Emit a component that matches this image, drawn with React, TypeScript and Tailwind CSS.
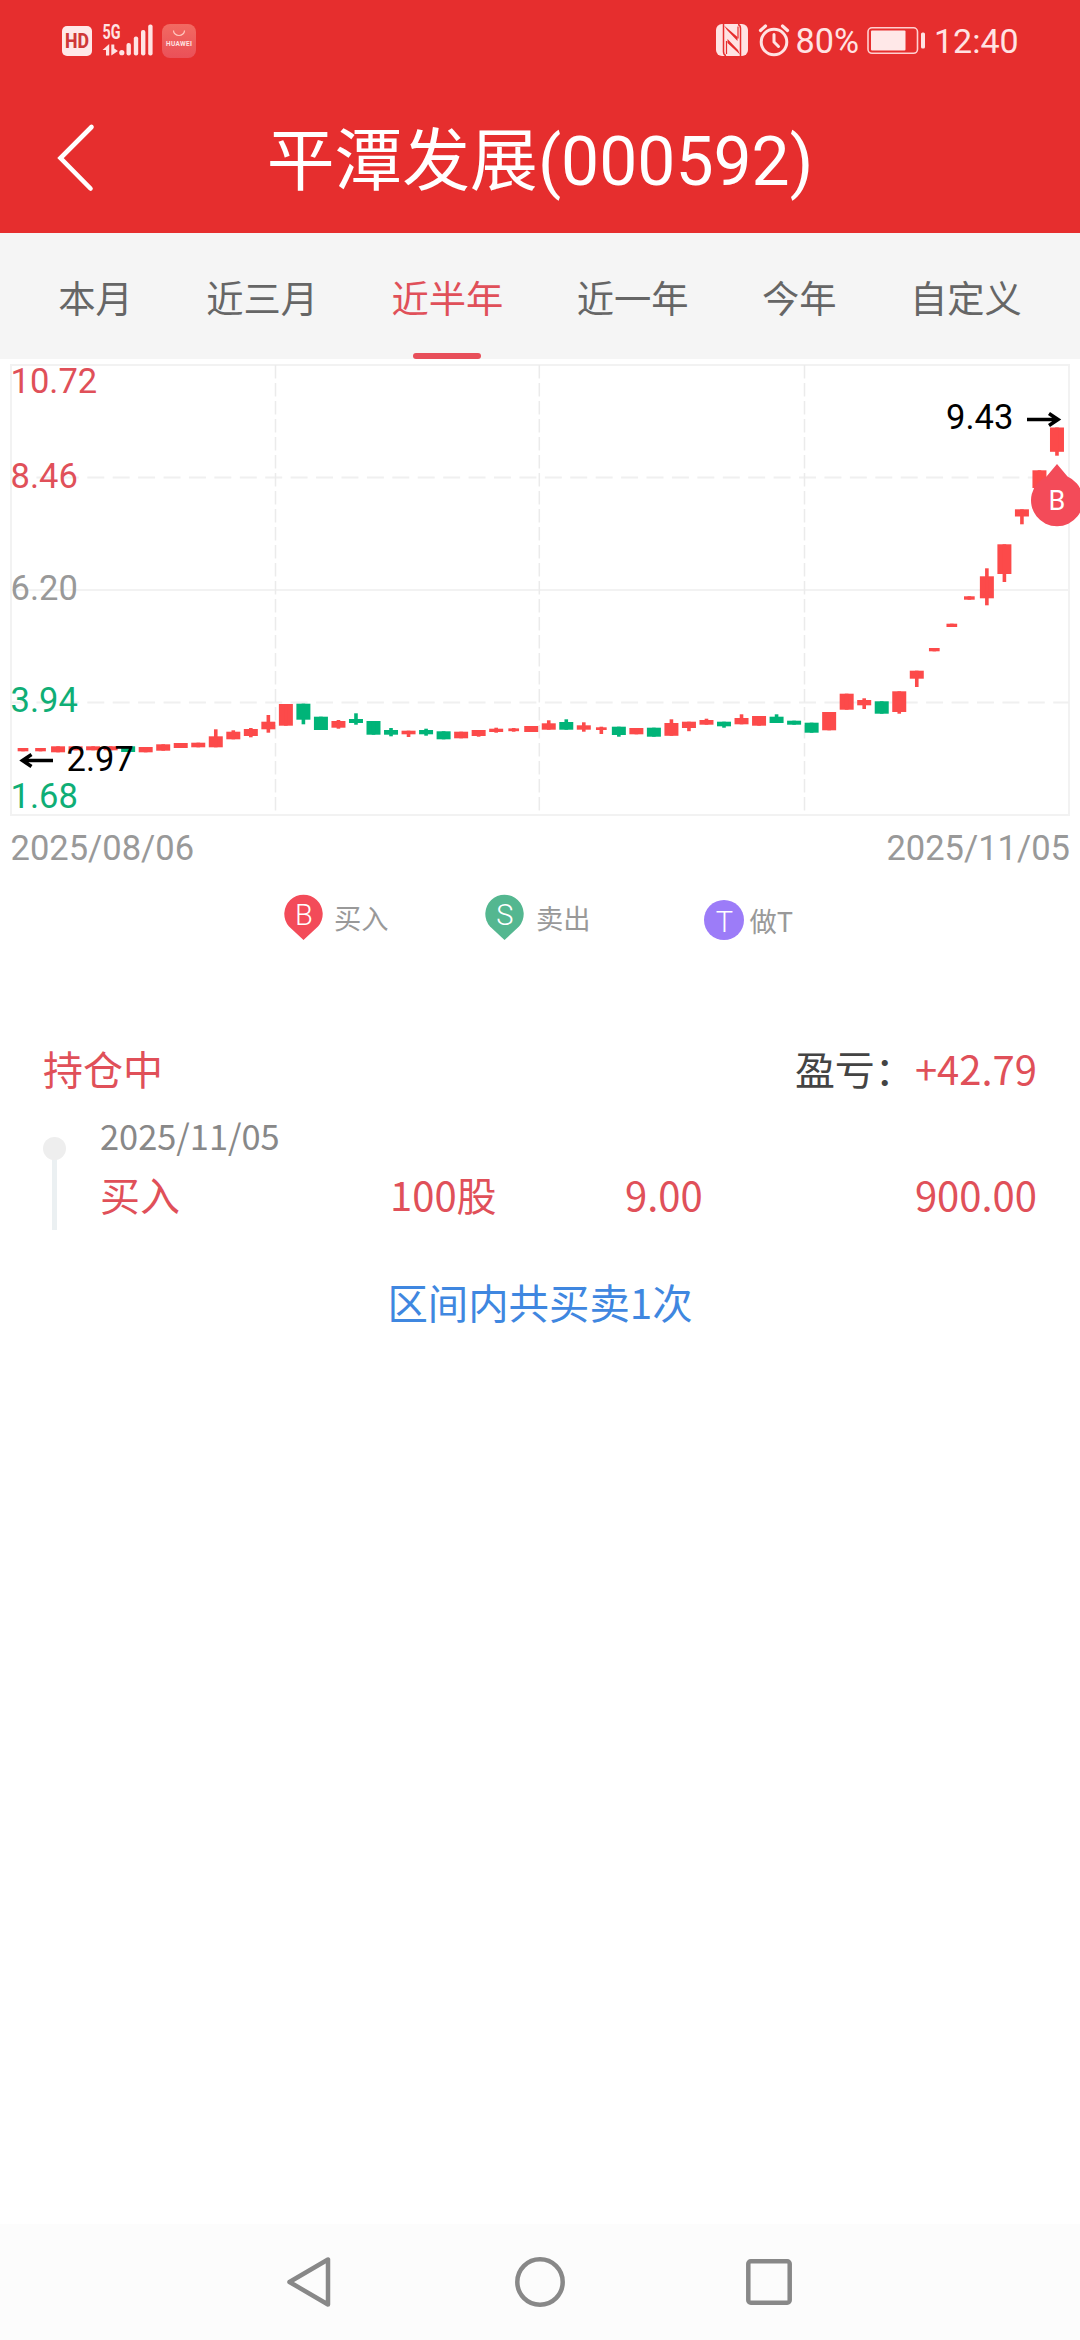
import React from "react";

const RED = "#fc4a4a";
const GREEN = "#00b478";

// [colour, body top, body bottom, high, low, flat?]
type Candle = [string, number, number, number, number, boolean?];
const candles: Candle[] = [
  [RED, 748, 751.3, 748, 751.3, true],
  [RED, 748, 751.3, 748, 751.3, true],
  [RED, 746.3, 752.3, 746.3, 752.3],
  [RED, 746.3, 750.3, 746.3, 750.3],
  [RED, 746.3, 750.3, 746.3, 750.3],
  [RED, 746.3, 750.3, 746.3, 750.3],
  [GREEN, 746.3, 752, 746.3, 752],
  [RED, 747, 752.3, 747, 752.3],
  [RED, 744.3, 750.7, 744.3, 750.7],
  [RED, 743, 748, 743, 748],
  [RED, 742.7, 747.3, 742.7, 747.3],
  [RED, 736.3, 747.3, 729.3, 747.3],
  [RED, 731.7, 739.3, 730.3, 739.3],
  [RED, 729, 736, 728, 737.3],
  [RED, 721.7, 729.3, 715, 732.7],
  [RED, 704, 725.7, 704, 725.7],
  [GREEN, 703.7, 719.7, 703.7, 724.3],
  [GREEN, 716.7, 730, 716.7, 730],
  [RED, 721, 727.7, 720, 728.7],
  [GREEN, 719, 723, 713.3, 724.7],
  [GREEN, 721, 734.7, 721, 734.7],
  [GREEN, 730, 734.7, 728, 736.3],
  [RED, 730.7, 734.3, 730.7, 737],
  [GREEN, 730, 734.3, 728.7, 735.7],
  [GREEN, 731.3, 739.3, 731.3, 739.3],
  [RED, 731.7, 738.3, 731.7, 738.3],
  [RED, 730, 736, 730, 736.7],
  [RED, 728.7, 732, 727.7, 732.7],
  [RED, 728.4, 731.2, 728, 731.7, true],
  [RED, 726, 732, 726, 732],
  [RED, 723.3, 729.7, 720.3, 729.7],
  [GREEN, 722, 729.7, 719.3, 729.7],
  [RED, 725.3, 729.7, 722.3, 731.7],
  [RED, 727.3, 730, 726.7, 734, true],
  [GREEN, 726.7, 735, 726.7, 736.7],
  [RED, 728, 734.3, 728, 734.3],
  [GREEN, 727.7, 736.7, 727.7, 736.7],
  [RED, 723, 735.8, 719.3, 735.8],
  [RED, 721.7, 728, 721.7, 731.2],
  [RED, 720, 724.7, 718.7, 724.7],
  [GREEN, 721.7, 726.3, 721.7, 727.7],
  [RED, 718, 724.3, 714.3, 724.3],
  [RED, 716, 725.7, 716, 725.7],
  [GREEN, 716.7, 723, 714.3, 723],
  [GREEN, 720.7, 724.7, 720.7, 724.7],
  [GREEN, 722.7, 732.7, 722.7, 732.7],
  [RED, 712, 730.3, 712, 730.3],
  [RED, 693.7, 709.7, 693.7, 709.7],
  [RED, 700, 705.3, 698.3, 709],
  [GREEN, 701.3, 713.7, 701.3, 713.7],
  [RED, 691.3, 712, 691.3, 713.7],
  [RED, 670.7, 678.7, 670.7, 687],
  [RED, 648, 651.3, 648, 651.3, true],
  [RED, 623.7, 627, 623.7, 627, true],
  [RED, 596.3, 599.7, 596.3, 599.7, true],
  [RED, 576.3, 598.3, 568.3, 605.3],
  [RED, 544.3, 574, 544.3, 582],
  [RED, 509.3, 516.5, 509.3, 524.3],
  [RED, 470.3, 488, 470.3, 488],
  [RED, 427.5, 451.8, 427.5, 455.7],
];

function StatusBar() {
  return (
    <div className="flex h-[82px] items-center justify-between pr-[62px] pl-[62px] font-[Roboto] text-[#ffe3e3]">
      <svg className="h-[40px] w-[140px]" viewBox="62 21 140 40">
        <rect x="62" y="26" width="30" height="30" rx="5" fill="#ffe8e8" />
        <text x="77" y="48" textAnchor="middle" fontFamily="Roboto" fontWeight="800" fontSize="20" textLength="24" lengthAdjust="spacingAndGlyphs" fill="#cf3838">HD</text>
        <text x="102.5" y="38.5" fontFamily="Roboto" fontWeight="700" fontSize="19.5" textLength="18" lengthAdjust="spacingAndGlyphs" fill="#ffe3e3">5G</text>
        <g fill="#ffe3e3">
          <path d="M109.2 44v11.5h-3.2V50h-3.500zM111.300 44.500h3v4l3.700 2.500-6.700 4.500z" />
          <circle cx="121.800" cy="52.700" r="2.600" />
          <rect x="126.500" y="43" width="4.400" height="12.500" rx="2" />
          <rect x="133.800" y="36.500" width="4.400" height="19" rx="2" />
          <rect x="141" y="30" width="4.400" height="25.500" rx="2" />
          <rect x="148.200" y="24.500" width="4.400" height="31" rx="2" />
        </g>
        <defs>
          <linearGradient id="store" x1="0" y1="0" x2="0" y2="1">
            <stop offset="0" stopColor="#f26a62" />
            <stop offset="1" stopColor="#ea5058" />
          </linearGradient>
        </defs>
        <rect x="162" y="24" width="34" height="34" rx="8" fill="url(#store)" />
        <path d="M173.500 30.500a5.500 5 0 0 0 11 0" fill="none" stroke="#ffc9c0" strokeWidth="1.200" />
        <text x="179" y="45.800" textAnchor="middle" fontFamily="Roboto" fontWeight="700" fontSize="6.500" textLength="26" fill="#ffe3e3">HUAWEI</text>
      </svg>
      <div className="flex items-center">
        <svg className="h-[40px] w-[78px]" viewBox="716 21 78 40">
          <rect x="716" y="24" width="32" height="32" rx="6" fill="#ffe3e3" />
          <path d="M723.500 24V51.500q0 3.500 2.500 4M740.500 56V28.500q0-3.500-2.500-4" fill="none" stroke="#e62e2e" strokeWidth="1.500" />
          <path d="M724 25.500L737.500 37V41L727 30zM740 54.500L727.500 43V39L738 50z" fill="#e62e2e" />
          <path d="M726.500 41v13M738 26.500v12" fill="none" stroke="#e62e2e" strokeWidth="1.200" />
          <g fill="none" stroke="#ffe3e3" strokeLinecap="round">
            <circle cx="774" cy="42" r="12.800" strokeWidth="3" />
            <path d="M774 34.500v7.500l4.500 4.500" strokeWidth="3" />
            <path d="M760.500 30.500l5-4.500M787.500 30.500l-5-4.500" strokeWidth="3.200" />
          </g>
        </svg>
        <span className="w-[73px] pl-[1.500px] text-[34.200px] leading-[40px]">80%</span>
        <svg className="h-[40px] w-[67px]" viewBox="867 21 67 40">
          <rect x="868" y="27.800" width="49.500" height="25.500" rx="4" fill="none" stroke="#ffd0d0" strokeWidth="1.600" />
          <rect x="871" y="30.500" width="34.500" height="20" rx="1" fill="#ffe8e8" />
          <rect x="921" y="32.500" width="4" height="16" rx="1.500" fill="#ffe3e3" />
        </svg>
        <span className="w-[84px] text-[34px] leading-[40px] whitespace-nowrap">12:40</span>
      </div>
    </div>
  );
}

function Header() {
  return (
    <header className="h-[233px] bg-[#e62e2e]">
      <StatusBar />
      <div className="grid h-[151px] grid-cols-[120px_1fr_120px] items-center">
        <svg className="ml-[54px] h-[74px] w-[44px]" viewBox="54 120 44 74">
          <path d="M91.500 126L60.500 157l30 30.500" fill="none" stroke="#fff" strokeWidth="4.600" strokeLinecap="round" />
        </svg>
        <h1 className="pt-[8px] text-center font-[Roboto,'Noto_Sans_CJK_SC',sans-serif] text-[67.800px] leading-[90px] whitespace-nowrap text-white">
          平潭发展(000592)
        </h1>
      </div>
    </header>
  );
}

const tabs = ["本月", "近三月", "近半年", "近一年", "今年", "自定义"];

function Tabs() {
  return (
    <nav className="flex h-[126px] justify-center bg-[#f5f5f5] font-['Noto_Sans_CJK_SC',sans-serif] text-[37.300px]">
      {tabs.map((t) => {
        const active = t === "近半年";
        return (
          <button key={t} className={`flex flex-col items-center px-[36.700px] whitespace-nowrap ${active ? "text-[#e05059]" : "text-[#666]"}`}>
            <span className="flex h-[120px] items-center pt-[8px] leading-[54px]">{t}</span>
            {active && <span className="h-[6px] w-[68px] rounded-[3px] bg-[#e84f5a]" />}
          </button>
        );
      })}
    </nav>
  );
}

function Chart() {
  return (
    <svg className="block h-[521px] w-full" viewBox="0 359 1080 521" fontFamily="Roboto, sans-serif" fontSize="34.5">
      <g fill="none" stroke="#f2f2f2" strokeWidth="2">
        <rect x="11" y="365" width="1058" height="450" />
        <path d="M11 590H1069" />
        <path d="M11 477.500H1069M11 702.500H1069" strokeDasharray="17 8.420" stroke="#f0f0f0" />
        <path d="M275.500 365V815M539.300 365V815M804.500 365V815" strokeDasharray="13.500 4.500" strokeWidth="1.500" stroke="#ebebeb" />
      </g>
      <g fill="#e05059">
        <text x="10.500" y="393">10.72</text>
        <text x="10.500" y="488">8.46</text>
      </g>
      <text x="10.500" y="600.300" fill="#999">6.20</text>
      <g fill="#0fae76">
        <text x="10.500" y="712.300">3.94</text>
        <text x="10.500" y="807.800">1.68</text>
      </g>
      {candles.map(([fill, top, bottom, high, low, flat], i) => {
        const cx = 23 + i * 17.525;
        const w = flat ? 10.7 : 14;
        return (
          <g key={i} fill={fill}>
            <rect x={cx - w / 2} y={top} width={w} height={bottom - top} />
            <rect x={cx - 1.8} y={high} width={3.6} height={low - high} />
          </g>
        );
      })}
      <g fill="#000">
        <text x="66.500" y="770.500">2.97</text>
        <text x="946" y="428.800">9.43</text>
      </g>
      <g fill="none" stroke="#000" strokeWidth="3.600">
        <path d="M53 760.500H23M31.500 754.500L22.500 760.500l9 6" />
        <path d="M1027 419.500H1058M1049 413.500L1058 419.500l-9 6" />
      </g>
      <path d="M1057 464L1067.500 476.500A26 26 0 1 1 1046.500 476.500Z" fill="#f34b59" />
      <text x="1057" y="509.500" textAnchor="middle" fontSize="27" fill="#fff">B</text>
      <g fill="#999">
        <text x="10.500" y="859.500">2025/08/06</text>
        <text x="1070" y="859.500" textAnchor="end">2025/11/05</text>
      </g>
    </svg>
  );
}

function Pin({ letter, color }: { letter: string; color: string }) {
  return (
    <svg className="h-[49px] w-[39px]" viewBox="0 0 39 49">
      <path d="M19.500 46L5 32.500A19.200 19.200 0 1 1 34 32.500Z" fill={color} />
      <text x="19.800" y="30.500" textAnchor="middle" fontFamily="Roboto" fontSize="29" fontWeight="300" fill="#fff">{letter}</text>
    </svg>
  );
}

function Legend() {
  return (
    <div className="flex h-[100px] pt-[14px] pl-[284px] font-['Noto_Sans_CJK_SC',sans-serif] text-[27.300px] leading-[40px] text-[#999]">
      <div className="flex w-[201px]">
        <Pin letter="B" color="#f34b59" />
        <span className="pt-[3px] pl-[11px]">买入</span>
      </div>
      <div className="flex w-[219px]">
        <Pin letter="S" color="#54b790" />
        <span className="pt-[3px] pl-[12px]">卖出</span>
      </div>
      <div className="flex pt-[6px]">
        <svg className="h-[40px] w-[40px]" viewBox="0 0 40 40">
          <circle cx="20" cy="20" r="20" fill="#9c7cf8" />
          <text x="20.500" y="31.500" textAnchor="middle" fontFamily="Roboto" fontSize="29" fontWeight="300" fill="#fff">T</text>
        </svg>
        <span className="pl-[5.500px]">做T</span>
      </div>
    </div>
  );
}

function Position() {
  return (
    <section className="px-[43px] pt-[58px] font-['Noto_Sans_CJK_SC',sans-serif] text-[40px] leading-[60px] text-[#e05059]">
      <div className="flex justify-between">
        <span>持仓中</span>
        <span>
          <span className="text-[#444]">盈亏：</span>+42.79
        </span>
      </div>
      <div className="flex pt-[12px]">
        <div className="flex w-[57px] flex-col items-start pt-[27px]">
          <span className="h-[23px] w-[23px] rounded-full bg-[#eee]" />
          <span className="ml-[9px] h-[70px] w-[5px] bg-[#ebf0f2]" />
        </div>
        <div className="flex-1">
          <div className="h-[54px] text-[34.400px] leading-[50px] text-[#888]">2025/11/05</div>
          <div className="grid grid-cols-[290px_235px_1fr_auto]">
            <span>买入</span>
            <span>100股</span>
            <span>9.00</span>
            <span>900.00</span>
          </div>
        </div>
      </div>
      <p className="pt-[42px] text-center text-[40.400px] text-[#3f87e0]">区间内共买卖1次</p>
    </section>
  );
}

function NavBar() {
  return (
    <footer className="mt-auto grid h-[116px] grid-cols-[309px_462px_309px] items-center bg-[#fcfcfc]">
      <svg className="ml-[280px] h-[60px] w-[60px]" viewBox="280 2252 60 60" fill="none" stroke="#888" strokeWidth="4.500" strokeLinejoin="round">
        <path d="M328 2259.500V2304.500L289.500 2282Z" />
      </svg>
      <svg className="mx-auto h-[60px] w-[60px]" viewBox="0 0 60 60" fill="none" stroke="#888" strokeWidth="4.500">
        <circle cx="30" cy="30" r="22.700" />
      </svg>
      <svg className="-ml-[32px] h-[60px] w-[60px]" viewBox="0 0 60 60" fill="none" stroke="#888" strokeWidth="4.500">
        <rect x="9.300" y="9.300" width="41.400" height="41.400" rx="2.500" />
      </svg>
    </footer>
  );
}

export default function App() {
  return (
    <div className="flex h-[2340px] w-[1080px] flex-col overflow-hidden bg-white">
      <Header />
      <Tabs />
      <Chart />
      <Legend />
      <Position />
      <NavBar />
    </div>
  );
}
